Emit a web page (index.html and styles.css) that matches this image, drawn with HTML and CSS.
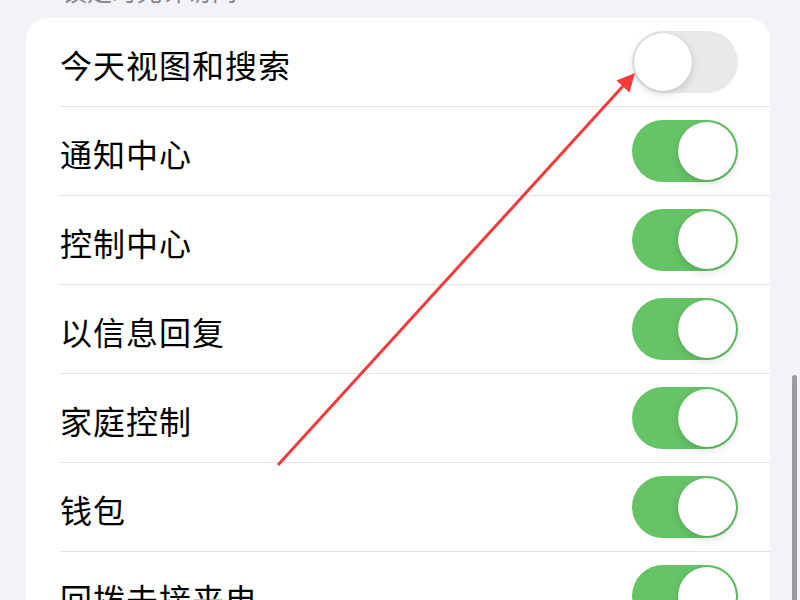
FILE: index.html
```html
<!DOCTYPE html>
<html lang="zh-CN">
  <head>
    <meta charset="UTF-8" />
    <meta name="viewport" content="width=device-width, initial-scale=1.0" />
    <title>锁定时允许访问</title>
    <link rel="stylesheet" href="styles.css">
  </head>
  <body>
    <main class="page">
      <div class="section-title">锁定时允许访问</div>
      <div class="card">
        <div class="row">
          <div class="row-inner">
            <span class="label">今天视图和搜索</span>
            <div class="switch"><div class="knob"></div></div>
          </div>
        </div>
        <div class="row">
          <div class="row-inner">
            <span class="label">通知中心</span>
            <div class="switch on"><div class="knob"></div></div>
          </div>
        </div>
        <div class="row">
          <div class="row-inner">
            <span class="label">控制中心</span>
            <div class="switch on"><div class="knob"></div></div>
          </div>
        </div>
        <div class="row">
          <div class="row-inner">
            <span class="label">以信息回复</span>
            <div class="switch on"><div class="knob"></div></div>
          </div>
        </div>
        <div class="row">
          <div class="row-inner">
            <span class="label">家庭控制</span>
            <div class="switch on"><div class="knob"></div></div>
          </div>
        </div>
        <div class="row">
          <div class="row-inner">
            <span class="label">钱包</span>
            <div class="switch on"><div class="knob"></div></div>
          </div>
        </div>
        <div class="row">
          <div class="row-inner">
            <span class="label">回拨未接来电</span>
            <div class="switch on"><div class="knob"></div></div>
          </div>
        </div>
      </div>
    </main>
    <!-- annotation arrow drawn over the screenshot -->
    <svg class="arrow" width="800" height="600" viewBox="0 0 800 600">
      <line x1="278" y1="465" x2="624" y2="85" stroke="#f43a3a" stroke-width="3" />
      <polygon points="635,73 629.5,92.5 616.5,80.5" fill="#f43a3a" />
    </svg>
    <div class="scrollbar"></div>
  </body>
</html>
```

FILE: styles.css
```css
html,
body {
  margin: 0;
  height: 100%;
  overflow: hidden;
}
body {
  background-color: #f2f2f7;
  font-family: "Noto Sans CJK SC", "Noto Sans", sans-serif;
  color: #000;
}
.page {
  padding-left: 26px;
  width: 744px;
}
.section-title {
  height: 18px;
  line-height: 1;
  font-size: 25px;
  color: #8a8a8e;
  padding-left: 36px;
  margin-top: -22px;
  padding-top: 0;
  box-sizing: content-box;
  overflow: visible;
  position: relative;
  top: 0;
}
.card {
  margin-top: 22px;
  background-color: #fff;
  border-radius: 22px;
  overflow: hidden;
}
.row {
  padding-left: 34px;
}
.row-inner {
  display: flex;
  align-items: center;
  justify-content: space-between;
  height: 88px;
  padding-right: 32px;
  border-bottom: 1px solid #e2e2e4;
}
.label {
  font-size: 32px;
  line-height: 1;
  letter-spacing: 1px;
  padding-top: 4px;
}
.switch {
  width: 106px;
  height: 62px;
  border-radius: 31px;
  background-color: #e9e9ea;
  padding: 2px;
  box-sizing: border-box;
  display: flex;
  justify-content: flex-start;
}
.switch.on {
  background-color: #65c466;
  justify-content: flex-end;
}
.knob {
  width: 58px;
  height: 58px;
  border-radius: 50%;
  background-color: #fff;
  box-shadow: 0 3px 8px rgba(0, 0, 0, 0.15), 0 0 1px rgba(0, 0, 0, 0.2);
}
.arrow {
  position: absolute;
  left: 0;
  top: 0;
}
.scrollbar {
  position: absolute;
  left: 792px;
  top: 375px;
  width: 5px;
  height: 240px;
  border-radius: 3px;
  background-color: #9b9b9f;
}
```
